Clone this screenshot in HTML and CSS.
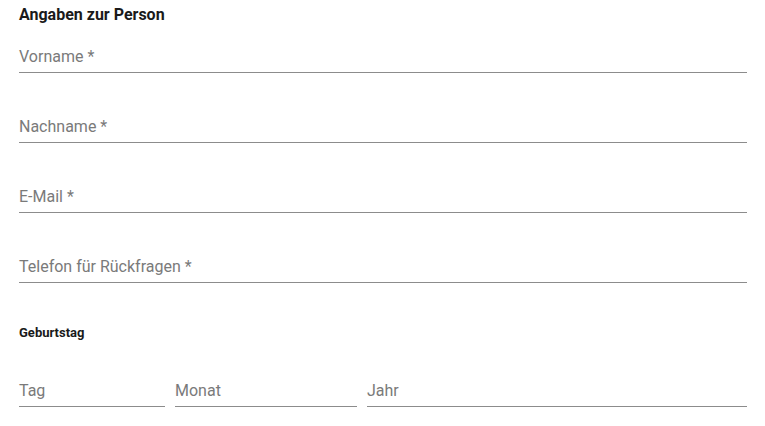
FILE: index.html
```html
<!DOCTYPE html>
<html lang="de">
<head>
<meta charset="utf-8">
<link rel="stylesheet" href="styles.css">
</head>
<body>
<form class="form">
  <h2 class="section-title">Angaben zur Person</h2>
  <div class="field"><span class="label">Vorname *</span></div>
  <div class="field"><span class="label">Nachname *</span></div>
  <div class="field"><span class="label">E-Mail *</span></div>
  <div class="field"><span class="label">Telefon für Rückfragen *</span></div>
  <h3 class="sub-title">Geburtstag</h3>
  <div class="date-row">
    <div class="field date"><span class="label">Tag</span></div>
    <div class="field date"><span class="label">Monat</span></div>
    <div class="field date"><span class="label">Jahr</span></div>
  </div>
</form>
</body>
</html>
```
FILE: styles.css
```css
html, body {
  margin: 0;
  padding: 0;
  background: #ffffff;
}
body {
  font-family: Roboto, "Liberation Sans", Arial, sans-serif;
  color: #212121;
}
.form {
  padding: 5px 18px 0 19px;
}
.section-title {
  margin: 0;
  font-size: 16px;
  line-height: 19px;
  font-weight: 700;
  color: #1a1a1a;
}
.field {
  display: flex;
  align-items: flex-end;
  height: 50px;
  border-bottom: 1px solid #8c8c8c;
  box-sizing: border-box;
  padding-bottom: 6px;
}
.field + .field {
  margin-top: 20px;
}
.form > .section-title + .field {
  height: 49px;
}
.label {
  font-size: 16px;
  line-height: 19px;
  color: #7a7a7a;
}
.sub-title {
  margin: 42px 0 0 0;
  font-size: 13px;
  line-height: 15px;
  font-weight: 700;
  color: #1a1a1a;
}
.date-row {
  display: grid;
  grid-template-columns: 146px 182px 1fr;
  column-gap: 10px;
  margin-top: 17px;
}
.date-row .field {
  margin-top: 0;
  height: 50px;
}
```
